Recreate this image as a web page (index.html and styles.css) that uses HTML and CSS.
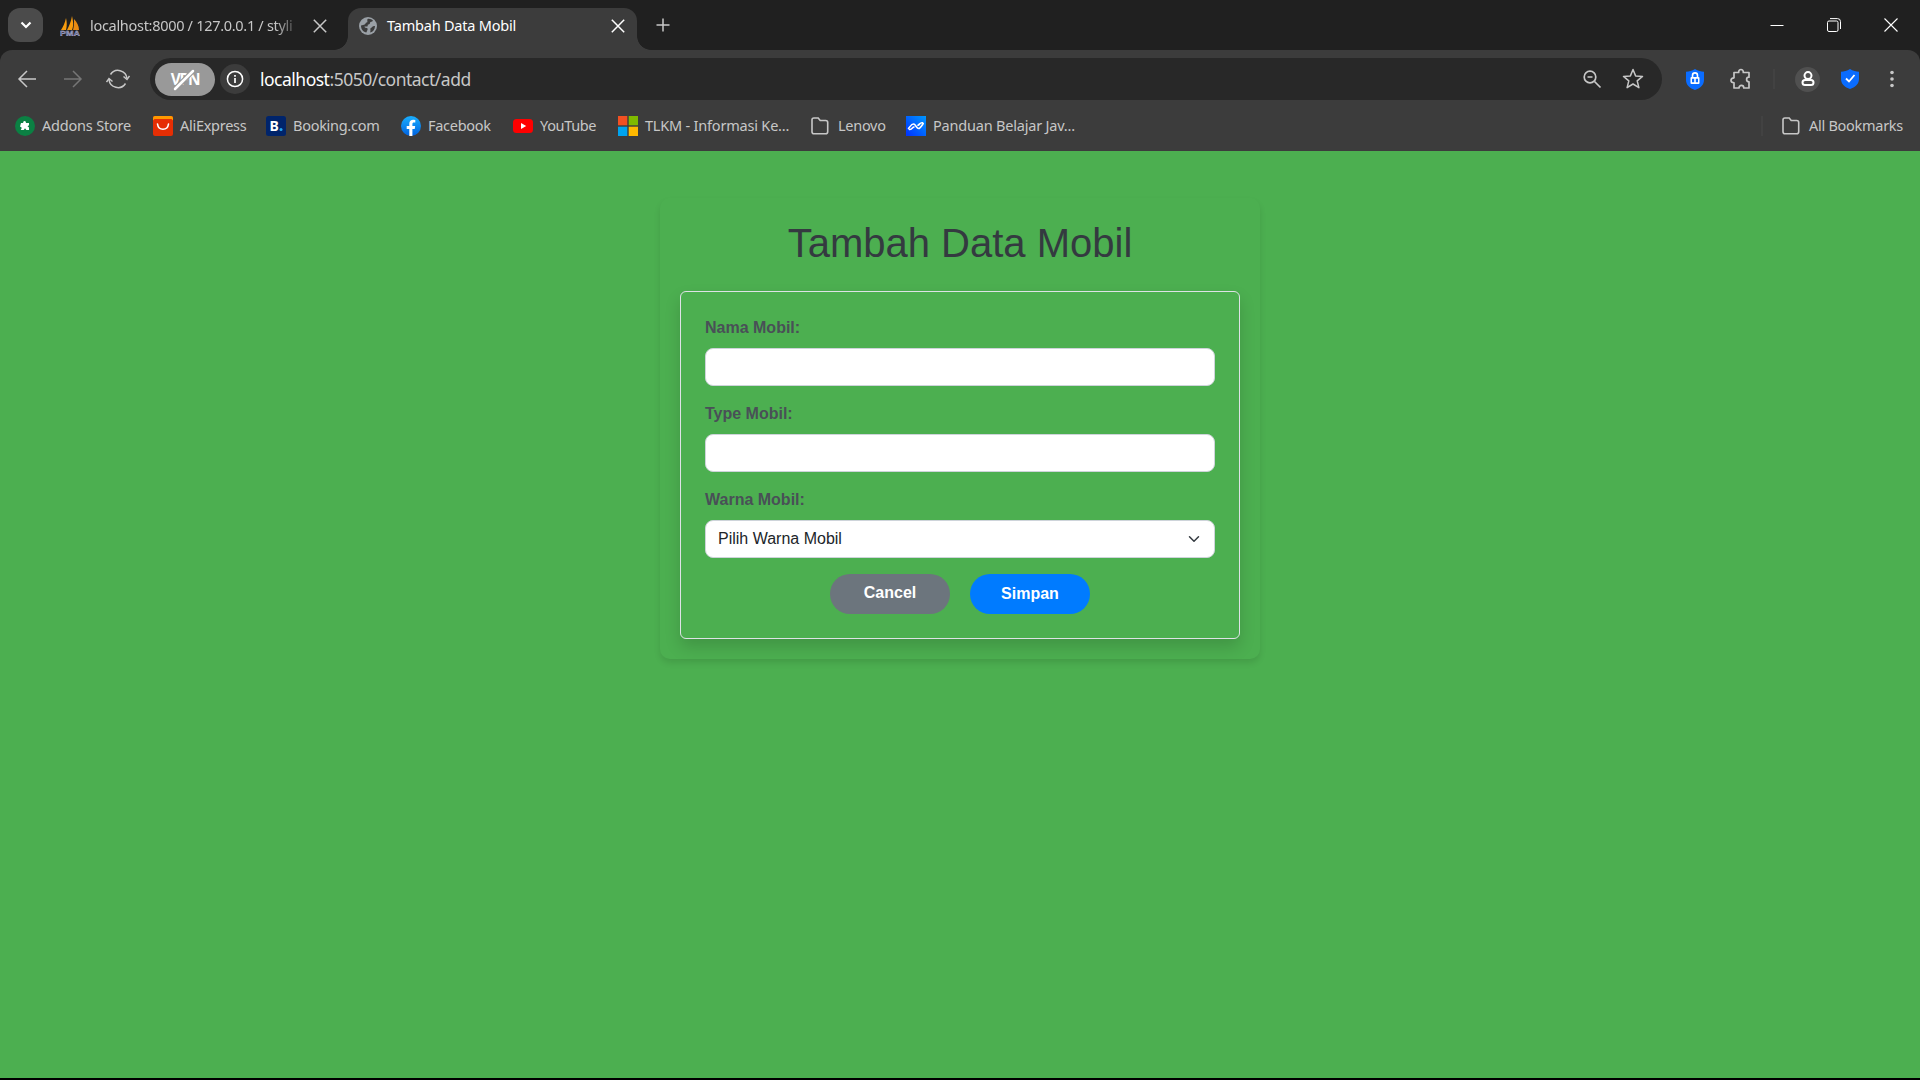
FILE: index.html
```html
<!DOCTYPE html>
<html lang="id">
<head>
<meta charset="utf-8">
<title>Tambah Data Mobil</title>
<link rel="stylesheet" href="styles.css">
</head>
<body>
<header class="browser">
  <div class="tabstrip">
    <div class="tab-search"><svg width="12" height="8" viewBox="0 0 12 8"><path d="M1.500 1.500 6 6l4.500-4.500" fill="none" stroke="#fff" stroke-width="2.200"/></svg></div>
    <div class="tab tab-idle">
      <svg class="fav" width="20" height="20" viewBox="0 0 20 20">
        <path d="M1 14C3 11 5 7 6 2c1 4 1 8 0 12z" fill="#f89c0e"/><path d="M7 14c2-4 4-8 5-14 1 5 2 9 0 14z" fill="#f89c0e"/><path d="M13 14c1-3 1-7 1-11 3 3 5 7 5 11z" fill="#e88a12"/>
        <text x="0" y="20" class="pma" textLength="20" lengthAdjust="spacingAndGlyphs">PMA</text>
      </svg>
      <span class="tab-title fade">localhost:8000 / 127.0.0.1 / styli</span>
      <svg class="x" width="14" height="14" viewBox="0 0 14 14"><path d="M.8.8l12.400 12.400M13.200.8.8 13.200" stroke="#c7c7c7" stroke-width="1.500"/></svg>
    </div>
    <div class="tab tab-active">
      <svg class="fav" width="18" height="18" viewBox="0 0 18 18"><circle cx="9" cy="9" r="9" fill="#9aa0a6"/><path d="M8.500 2c2-.5 4 .2 5.500 1.800-1 1.200-2.500.8-3 2 .2 1.200-1 1.800-2 1.800-.8.800.3 1.400-.7 2H5.500c0 1.200 1.200 1.400 2.300 1.400 1 .2 1 1.500.6 2.200-.8.500-.4 1.800-1.200 2.300C3.500 14.500 2 11.800 2 8.500l3-.8c2 0 1-2.200 3-2.200 1-.8-.2-1.500.500-3.500zM16 9c0 3.200-1.800 5.700-4.800 6.600l.3-2.600c-.5-1-.2-1.800 1-2.200.4-1.300 2-1.800 3.500-1.800z" fill="#3c3c3c"/></svg>
      <span class="tab-title">Tambah Data Mobil</span>
      <svg class="x" width="14" height="14" viewBox="0 0 14 14"><path d="M.8.8l12.400 12.400M13.200.8.8 13.200" stroke="#fff" stroke-width="1.500"/></svg>
    </div>
    <svg class="new-tab" width="14" height="14" viewBox="0 0 14 14"><path d="M7 .5v13M.5 7h13" stroke="#c7c7c7" stroke-width="1.500"/></svg>
    <div class="window-controls">
      <svg width="14" height="14" viewBox="0 0 14 14"><path d="M.5 7.500h13" stroke="#fff"/></svg>
      <svg width="14" height="14" viewBox="0 0 14 14"><rect x=".5" y="3" width="10.500" height="10.500" rx="1.500" fill="none" stroke="#fff"/><path d="M3 .6h7.500a3 3 0 0 1 3 3V11" fill="none" stroke="#fff"/></svg>
      <svg width="14" height="14" viewBox="0 0 14 14"><path d="M.5.5l13 13M13.500.5l-13 13" stroke="#fff" stroke-width="1.100"/></svg>
    </div>
  </div>
  <div class="toolbar">
    <div class="nav">
      <svg width="20" height="20" viewBox="0 0 20 20"><path d="M19 10H2M10 2 2 10l8 8" fill="none" stroke="#c7c7c7" stroke-width="1.500"/></svg>
      <svg width="20" height="20" viewBox="0 0 20 20"><path d="M1 10h17M10 2l8 8-8 8" fill="none" stroke="#767676" stroke-width="1.500"/></svg>
      <svg class="reload" width="24" height="22" viewBox="0 0 24 22"><path d="M4.500 6.500A9 9 0 0 1 21 10.500M19.500 15.500A9 9 0 0 1 3 11.500" fill="none" stroke="#c7c7c7" stroke-width="1.500"/><path d="M17.500 8.500l3.500 3 2.500-3.500M.5 14 3 10.500l3.500 3" fill="none" stroke="#c7c7c7" stroke-width="1.500"/></svg>
    </div>
    <div class="omnibox">
      <div class="vpn"><span>VPN</span><svg class="slash" width="24" height="22" viewBox="0 0 24 22"><path d="M3 20 21 2" stroke="#999" stroke-width="5"/><path d="M3 20 21 2" stroke="#fff" stroke-width="2.500" stroke-linecap="round"/></svg></div>
      <div class="info"><svg width="18" height="18" viewBox="0 0 18 18"><circle cx="9" cy="9" r="7.600" fill="none" stroke="#fff" stroke-width="1.500"/><path d="M9 8v5M9 5v1.700" stroke="#fff" stroke-width="1.700"/></svg></div>
      <div class="url"><b>localhost</b>:5050/contact/add</div>
      <svg class="lens" width="19" height="19" viewBox="0 0 19 19"><circle cx="7" cy="7" r="5.800" fill="none" stroke="#c7c7c7" stroke-width="1.700"/><path d="M4.500 7h5M11.500 11.500l6 6" stroke="#c7c7c7" stroke-width="1.700"/></svg>
      <svg width="22" height="22" viewBox="0 0 22 22"><path d="M11 1.500l2.600 6.400 6.900.5-5.300 4.500 1.700 6.800L11 16l-5.900 3.700 1.700-6.800L1.500 8.400l6.900-.5z" fill="none" stroke="#c7c7c7" stroke-width="1.500" stroke-linejoin="round"/></svg>
    </div>
    <div class="extensions">
      <svg class="ext-lock" width="18" height="21" viewBox="0 0 18 21"><path d="M9 0c3 2 6 2.500 9 2.700V11c0 5-4 8.500-9 10-5-1.500-9-5-9-10V2.700C3 2.500 6 2 9 0z" fill="#0a6cff"/><path d="M6.500 8V6.400a2.500 2.500 0 0 1 5 0V8" fill="none" stroke="#fff" stroke-width="1.600"/><rect x="4.500" y="8" width="9" height="7" rx="1" fill="#fff"/><path d="M6 9.700h2.200v3.600H6zM9.800 9.700H12v3.600H9.800z" fill="#0a6cff"/></svg>
      <svg class="ext-puzzle" width="22" height="22" viewBox="0 0 22 22"><path d="M4 4.500h4.700c-.5-4 5-4 4.600 0h5.700v4.700c-3.200 0-3.200 4.600 0 4.600V20h-5.200c0-3.400-4.800-3.400-4.800 0H4v-5.200c-4-.2-4-4.800 0-5z" fill="none" stroke="#c7c7c7" stroke-width="1.700" stroke-linejoin="round"/></svg>
      <i class="sep"></i>
      <div class="profile"><svg width="14" height="16" viewBox="0 0 14 16"><circle cx="7" cy="4.600" r="3.500" fill="none" stroke="#fff" stroke-width="2"/><rect x="1.500" y="9" width="11" height="5" rx="2.500" fill="none" stroke="#fff" stroke-width="2"/></svg></div>
      <svg class="ext-check" width="18" height="20" viewBox="0 0 18 20"><path d="M9 0c3 2 6 2.500 9 2.700V10c0 5-4 8.500-9 10-5-1.500-9-5-9-10V2.700C3 2.500 6 2 9 0z" fill="#0a6cff"/><path d="M5 9.500l3 3L13.500 6" fill="none" stroke="#fff" stroke-width="1.800"/></svg>
      <svg class="dots" width="4" height="18" viewBox="0 0 4 18"><g fill="#c7c7c7"><circle cx="2" cy="2.500" r="1.800"/><circle cx="2" cy="9" r="1.800"/><circle cx="2" cy="15.500" r="1.800"/></g></svg>
    </div>
  </div>
  <nav class="bookmarks">
    <a class="bm bm-addons"><svg width="20" height="20" viewBox="0 0 20 20"><circle cx="10" cy="10" r="10" fill="#0b8043"/><path d="M6 7h2.200c-.5-2.800 3.300-2.800 2.700 0H14v2.300l-1.500.9 1.500 1.300V14h-2.600L10 12.300 8.700 14H5.800l1-2.200L5 10.500z" fill="#fff"/></svg><span>Addons Store</span></a>
    <a class="bm bm-ali"><svg width="20" height="20" viewBox="0 0 20 20"><rect width="20" height="20" rx="2" fill="#e62e04"/><path d="M0 4.500V2a2 2 0 0 1 2-2h16a2 2 0 0 1 2 2v2.500L18.500 3h-17z" fill="#ff9900"/><path d="M4.500 8c1 7 10 7 11 0" fill="none" stroke="#fff" stroke-width="1.600" stroke-linecap="round"/></svg><span>AliExpress</span></a>
    <a class="bm bm-booking"><svg width="20" height="20" viewBox="0 0 20 20"><rect width="20" height="20" rx="2.500" fill="#00246b"/><text x="3.500" y="15" class="booking-b">B</text><circle cx="15" cy="13.500" r="1.500" fill="#22a7f0"/></svg><span>Booking.com</span></a>
    <a class="bm bm-fb"><svg width="20" height="20" viewBox="0 0 20 20"><defs><linearGradient id="fb" x2="0" y2="1"><stop stop-color="#19afff"/><stop offset="1" stop-color="#0062e0"/></linearGradient></defs><circle cx="10" cy="10" r="10" fill="url(#fb)"/><path d="M8.300 20v-7H5.700v-3h2.600V7.800c0-2.700 1.600-4.100 4-4.100l2 .2v2.600H13c-1.200 0-1.600.7-1.600 1.600V10h2.800l-.5 3h-2.300v7z" fill="#fff"/></svg><span>Facebook</span></a>
    <a class="bm bm-yt"><svg width="20" height="20" viewBox="0 0 20 20"><rect y="3" width="20" height="14" rx="3.500" fill="#f00"/><path d="M8 7l5.200 3L8 13z" fill="#fff"/></svg><span>YouTube</span></a>
    <a class="bm bm-tlkm"><svg width="20" height="20" viewBox="0 0 20 20"><path d="M0 0h9.300v9.300H0z" fill="#f25022"/><path d="M10.700 0H20v9.300h-9.300z" fill="#7fba00"/><path d="M0 10.700h9.300V20H0z" fill="#00a4ef"/><path d="M10.700 10.700H20V20h-9.300z" fill="#ffb900"/></svg><span>TLKM - Informasi Ke...</span></a>
    <a class="bm bm-lenovo"><svg width="20" height="20" viewBox="0 0 20 20"><path d="M1 3.800Q1 2 2.800 2h4.400l2 2.500h5.500q2 0 2 2v9.200q0 2-2 2H3q-2 0-2-2z" fill="none" stroke="#c7c7c7" stroke-width="1.600"/></svg><span>Lenovo</span></a>
    <a class="bm bm-java"><svg width="20" height="20" viewBox="0 0 20 20"><defs><linearGradient id="pj" x1="0" y1="1" x2="1" y2="0"><stop stop-color="#0030ff"/><stop offset="1" stop-color="#0098ff"/></linearGradient></defs><rect width="20" height="20" fill="url(#pj)"/><path d="M2.500 12.500C5 9.500 6 7 8.200 8.200c2 1.300 2.500 4.300 4.500 4.300 1.500 0 3-2.800 4.500-5M3.500 13.500c2.500.5 3-2.500 4.500-2.500M16.500 6.800c-2.500-.5-3 2-4.500 2.400" fill="none" stroke="#fff" stroke-width="1.600" stroke-linecap="round"/></svg><span>Panduan Belajar Jav...</span></a>
    <a class="bm bm-all"><i class="sep"></i><svg width="20" height="20" viewBox="0 0 20 20"><path d="M1 3.800Q1 2 2.800 2h4.400l2 2.500h5.500q2 0 2 2v9.200q0 2-2 2H3q-2 0-2-2z" fill="none" stroke="#c7c7c7" stroke-width="1.600"/></svg><span>All Bookmarks</span></a>
  </nav>
</header>
<main class="page">
  <div class="container">
    <h1>Tambah Data Mobil</h1>
    <form class="card">
      <label for="nama">Nama Mobil:</label>
      <input id="nama" class="control" type="text">
      <label for="type">Type Mobil:</label>
      <input id="type" class="control" type="text">
      <label for="warna">Warna Mobil:</label>
      <div class="control select" id="warna"><span>Pilih Warna Mobil</span><svg width="12" height="12" viewBox="0 0 16 16"><path d="m2 5 6 6 6-6" fill="none" stroke="#343a40" stroke-width="2" stroke-linecap="round" stroke-linejoin="round"/></svg></div>
      <div class="actions">
        <a class="btn btn-cancel">Cancel</a>
        <button type="button" class="btn btn-save">Simpan</button>
      </div>
    </form>
  </div>
</main>
</body>
</html>
```
FILE: styles.css
```css
* { box-sizing: border-box; }
body { margin: 0; height: 1080px; overflow: hidden; background: #000; display: flex; flex-direction: column; font-family: "Liberation Sans", Arial, sans-serif; }
svg { display: block; flex: none; }

.browser { flex: none; height: 151px; background: #202020; color: #c7c7c7; font-family: "Noto Sans", "Open Sans", sans-serif; font-size: 14.5px; }
.tabstrip { height: 50px; display: flex; align-items: center; padding-left: 8px; }
.tab-search { width: 35px; height: 34px; border-radius: 12px; background: #4b4b4b; display: flex; align-items: center; justify-content: center; }
.tab { display: flex; align-items: center; height: 42px; margin-top: 8px; padding-bottom: 7px; }
.tab-idle { width: 305px; padding-left: 17px; }
.tab-idle .fav { margin-right: 10px; }
.tab-active { position: relative; width: 289px; padding-left: 11px; background: #3c3c3c; border-radius: 13px 13px 0 0; color: #fff; }
.tab-active::before, .tab-active::after { content: ""; position: absolute; bottom: 0; width: 14px; height: 14px; }
.tab-active::before { left: -14px; background: radial-gradient(circle at 0 0, #202020 13.5px, #3c3c3c 14.2px); }
.tab-active::after { right: -14px; background: radial-gradient(circle at 100% 0, #202020 13.5px, #3c3c3c 14.2px); }
.tab-active .fav { margin-right: 10px; }
.tab-title { width: 211px; padding-bottom: 2px; white-space: nowrap; letter-spacing: -0.3px; }
.tab-active .tab-title { width: 223px; letter-spacing: -0.2px; }
.fade { -webkit-mask-image: linear-gradient(90deg, #000 185px, transparent 211px); mask-image: linear-gradient(90deg, #000 185px, transparent 211px); }
.tab .x { margin-left: auto; margin-right: 21px; }
.tab-active .x { margin-right: 12px; }
.pma { font: bold 7px "Liberation Sans", sans-serif; fill: #555a8c; stroke: #c9cbe0; stroke-width: .3px; }
.new-tab { margin-left: 19px; }
.window-controls { display: flex; gap: 43px; margin-left: auto; padding-right: 22px; }

.toolbar { height: 58px; padding: 0 0 0 17px; display: flex; align-items: center; background: #3c3c3c; border-radius: 12px 12px 0 0; }
.nav { display: flex; align-items: center; gap: 26px; width: 133px; }
.nav .reload { margin-left: -3px; }
.omnibox { flex: none; width: 1512px; height: 42px; border-radius: 21px; background: #282828; display: flex; align-items: center; padding: 0 18px 0 5px; }
.vpn { position: relative; width: 60px; height: 33px; border-radius: 17px; background: #999; color: #fff; font: bold 15.5px "Noto Sans", sans-serif; display: flex; align-items: center; justify-content: center; }
.vpn span { letter-spacing: -1.2px; }
.slash { position: absolute; left: 17px; top: 6px; }
.info { width: 30px; height: 30px; margin-left: 5px; border-radius: 50%; background: #3c3c3c; display: flex; align-items: center; justify-content: center; }
.url { margin-left: 10px; flex: 1; font-size: 17.5px; letter-spacing: -0.5px; }
.url b { font-weight: 400; color: #fff; }
.lens { margin-right: 20px; }
.extensions { flex: 1; display: flex; align-items: center; }
.ext-lock { margin-left: 24px; }
.ext-puzzle { margin-left: 26px; }
.sep { flex: none; width: 2px; height: 20px; background: #424242; }
.extensions .sep { margin-left: 21px; }
.profile { width: 25px; height: 25px; margin-left: 20px; border-radius: 50%; background: #505050; display: flex; align-items: center; justify-content: center; }
.ext-check { margin-left: 21px; }
.dots { margin-left: 31px; }

.bookmarks { height: 43px; display: flex; align-items: center; background: #3c3c3c; padding: 0 17px 7px 15px; }
.bm { display: flex; align-items: center; gap: 7px; height: 20px; margin-top: -1px; white-space: nowrap; letter-spacing: -0.28px; }
.bm span { padding-bottom: 2px; }
.bm-addons { width: 138px; letter-spacing: -0.2px; }
.bm-ali { width: 113px; }
.bm-booking { width: 135px; }
.bm-fb { width: 112px; }
.bm-yt { width: 105px; letter-spacing: -0.35px; }
.bm-tlkm { width: 193px; letter-spacing: -0.2px; }
.bm-lenovo { width: 95px; }
.bm-java { letter-spacing: -0.2px; }
.bm-all { margin-left: auto; }
.bm-all .sep { margin-right: 12px; }
.booking-b { font: bold 14px "Noto Sans", sans-serif; fill: #fff; }

.page { height: 927px; background: #4caf50; padding-top: 47px; }
.container { width: 600px; height: 461px; margin: 0 auto; padding: 21px 20px 20px; border-radius: 10px; box-shadow: 0 4px 6px rgba(0, 0, 0, .1); }
h1 { margin: 0 0 24px; font-size: 40px; line-height: 48px; font-weight: 400; color: #343a40; text-align: center; }
.card { height: 348px; padding: 24px; border: 1px solid #dee2e6; border-radius: 6px; box-shadow: 0 8px 16px rgba(0, 0, 0, .15); }
label { display: block; height: 24px; margin-bottom: 8px; font-size: 16px; line-height: 24px; font-weight: 700; color: #495057; }
.control { display: block; width: 100%; height: 38px; margin: 0 0 16px; padding: 6px 12px; border: 1px solid #ced4da; border-radius: 8px; background: #fff; font-size: 16px; color: #212529; }
.select { display: flex; align-items: center; justify-content: space-between; }
.select svg { margin-right: 2px; }
.actions { display: flex; justify-content: center; gap: 20px; }
.btn { width: 120px; height: 40px; padding: 0; border: 0; border-radius: 20px; color: #fff; font: bold 16px/38px "Liberation Sans", Arial, sans-serif; text-align: center; }
.btn-cancel { background: #6c757d; }
.btn-save { background: #007bff; line-height: 40px; }
```
